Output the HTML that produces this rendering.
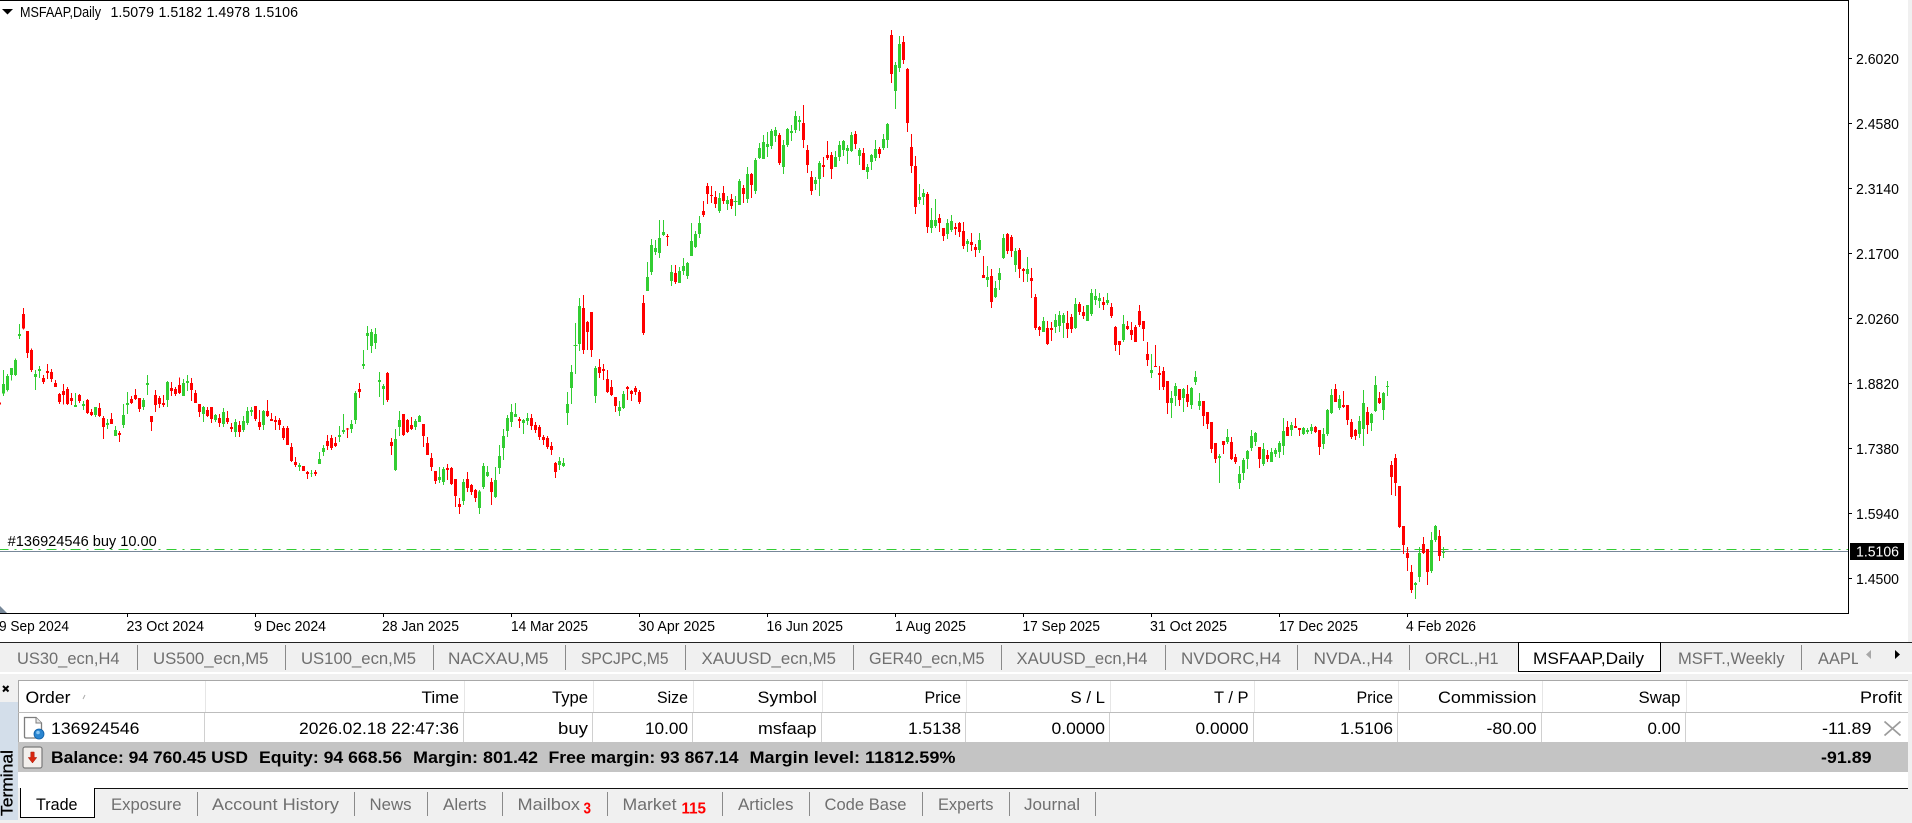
<!DOCTYPE html>
<html lang="en">
<head>
<meta charset="utf-8">
<title>MSFAAP,Daily</title>
<style>
html,body{margin:0;padding:0;background:#f0f0f0;width:1912px;height:823px;overflow:hidden}
svg{display:block;position:absolute;left:0;top:0}
text{font-family:"Liberation Sans",Arial,sans-serif;white-space:pre}
.c path{fill:none;shape-rendering:crispEdges}
.gw{stroke:#32cd32;stroke-width:3}
.gb{stroke:#32cd32;stroke-width:9}
.rw{stroke:#f00;stroke-width:3}
.rb{stroke:#f00;stroke-width:9}
.l{shape-rendering:crispEdges}
.ax{font-size:14.5px;fill:#000}
.tb{font-size:17px;fill:#6f6f6f}
.th{font-size:17px;fill:#000}
.bd{font-size:17px;font-weight:bold;fill:#000}
.rd{font-size:16px;font-weight:bold;fill:#f00}
</style>
</head>
<body>
<svg width="1912" height="823" viewBox="0 0 1912 823" xmlns="http://www.w3.org/2000/svg">
<!-- backgrounds -->
<rect x="0" y="0" width="1912" height="823" fill="#f0f0f0"/>
<rect x="0" y="0" width="1908" height="642" fill="#fff"/>

<!-- chart frame -->
<g class="l" fill="#000">
<rect x="0" y="0" width="1849" height="1"/>
<rect x="1848" y="0" width="1" height="614"/>
<rect x="0" y="613" width="1849" height="1"/>
<rect x="1849" y="58" width="3" height="1"/><rect x="1849" y="123" width="3" height="1"/><rect x="1849" y="188" width="3" height="1"/><rect x="1849" y="253" width="3" height="1"/><rect x="1849" y="318" width="3" height="1"/><rect x="1849" y="383" width="3" height="1"/><rect x="1849" y="448" width="3" height="1"/><rect x="1849" y="513" width="3" height="1"/><rect x="1849" y="578" width="3" height="1"/>
<rect x="127" y="613" width="1" height="4"/><rect x="255" y="613" width="1" height="4"/><rect x="383" y="613" width="1" height="4"/><rect x="511" y="613" width="1" height="4"/><rect x="639" y="613" width="1" height="4"/><rect x="767" y="613" width="1" height="4"/><rect x="895" y="613" width="1" height="4"/><rect x="1023" y="613" width="1" height="4"/><rect x="1151" y="613" width="1" height="4"/><rect x="1279" y="613" width="1" height="4"/><rect x="1407" y="613" width="1" height="4"/>
</g>
<polygon points="2,9 13,9 7.5,14.5" fill="#000"/>
<polygon points="0,606 7,613 0,613" fill="#778899"/>

<!-- order / price lines -->
<line class="l" x1="0" y1="549.5" x2="1848" y2="549.5" stroke="#32cd32" stroke-width="1" stroke-dasharray="10 6 2 6" stroke-dashoffset="1.33"/>
<rect class="l" x="0" y="551" width="1848" height="1" fill="#778899"/>

<!-- candles -->
<g class="c" transform="translate(.1667 290) scale(.33333)">
<path class="gw" d="M10 240V318M22 252V305M34 234V272M46 205V258M58 102V147M106 240V300M118 228V264M226 309V351M250 333V360M286 351V381M322 387V417M346 408V438M370 342V414M382 306V372M430 324V360M442 255V315M502 273V351M550 267V318M562 255V303M610 348V396M646 372V396M670 354V411M706 387V441M730 378V426M742 351V405M754 351V378M790 360V420M898 519V543M934 540V561M958 486V522M970 465V498M1018 408V456M1030 372V432M1054 390V429M1066 303V402M1090 180V237M1102 108V180M1114 117V189M1126 114V177M1138 246V321M1150 282V345M1186 417V543M1198 363V438M1246 387V420M1258 375V396M1318 531V579M1330 531V585M1390 567V645M1438 600V672"/>
<path class="gb" d="M10 282V310M22 258V300M34 234V255M46 210V255M58 132V138M106 252V261M118 237V243M226 345V351M250 342V348M286 351V375M322 399V405M346 420V438M370 375V405M382 339V345M430 330V351M442 279V285M502 276V330M550 279V318M562 273V279M610 351V372M646 375V390M670 366V402M706 396V426M730 393V420M742 363V399M754 360V366M790 363V405M898 525V531M934 549V551M958 507V522M970 474V486M1018 435V441M1030 420V426M1054 402V417M1066 309V390M1090 222V228M1102 129V138M1114 126V168M1126 132V159M1138 270V276M1150 288V297M1186 447V540M1198 390V411M1246 393V411M1258 378V396M1318 561V570M1330 537V576M1390 576V633M1438 604V654"/>
<path class="rw" d="M-2 337V344M70 54V118M82 123V204M94 175V246M130 255V282M142 222V267M154 237V276M166 270V291M178 309V342M190 282V343M202 291V345M214 309V345M238 312V339M262 327V372M274 357V378M298 339V381M310 378V447M334 369V402M358 423V456M394 318V342M406 297V330M418 324V366M454 378V423M466 300V366M478 318V354M490 315V351M514 276V318M526 291V318M538 262V312M574 264V333M586 300V339M598 342V381M622 351V381M634 351V399M658 372V411M682 363V402M694 399V426M718 393V441M766 348V393M778 360V420M802 330V381M814 369V393M826 378V420M838 384V420M850 408V450M862 408V465M874 459V516M886 501V531M910 528V543M922 543V567M946 540V558M982 435V480M994 435V480M1006 441V471M1042 414V444M1078 279V324M1162 246V336M1174 444V495M1210 372V438M1222 387V429M1234 381V420M1270 402V471M1282 441V495M1294 489V543M1306 543V582M1342 522V570M1354 531V585M1366 567V651M1378 624V672M1402 546V606M1414 582V615M1426 597V636"/>
<path class="rb" d="M-2 337V344M70 72V115M82 123V189M94 180V240M130 264V276M142 243V249M154 246V267M166 279V291M178 312V336M190 303V315M202 297V342M214 324V333M238 315V333M262 330V369M274 366V375M298 354V378M310 384V411M334 387V402M358 429V435M394 327V339M406 315V327M418 324V357M454 378V396M466 315V345M478 324V342M490 339V345M514 294V303M526 297V312M538 285V309M574 279V300M586 309V339M598 342V366M622 360V378M634 351V387M658 384V399M682 384V396M694 411V417M718 405V426M766 348V387M778 396V411M802 363V378M814 387V393M826 390V396M838 390V405M850 414V444M862 414V465M874 471V513M886 516V525M910 528V543M922 546V552M946 546V552M982 453V468M994 444V474M1006 459V468M1042 415V419M1078 297V306M1162 249V330M1174 456V468M1210 372V435M1222 390V426M1234 405V417M1270 402V438M1282 459V495M1294 504V531M1306 543V573M1342 534V540M1354 534V582M1366 567V618M1378 642V651M1402 567V594M1414 585V606M1426 600V624"/>
</g>
<g class="c" transform="translate(480.1667 270) scale(.33333)">
<path class="gw" d="M10 579V657M22 588V621M46 591V684M58 525V612M70 477V570M82 435V501M94 402V471M106 399V441M130 447V492M142 429V465M238 561V600M250 564V591M262 366V465M274 285V402M286 159V312M298 84V243M346 288V399M418 393V438M430 363V417"/>
<path class="gb" d="M10 588V651M22 606V618M46 630V681M58 558V594M70 498V534M82 444V483M94 426V456M106 432V441M130 450V459M142 444V453M238 573V585M250 579V588M262 402V429M274 306V354M298 108V222M346 294V378M418 411V423M430 372V414"/>
<path class="gw" d="M280 226H292" style="stroke-width:3"/>
<path class="rw" d="M34 624V705M118 441V474M154 432V480M166 456V489M178 465V510M190 495V525M202 498V537M214 516V555M226 576V624M310 75V252M322 153V240M334 126V261M358 267V324M370 282V330M382 300V369M394 330V378M406 381V426M442 348V390M454 360V393M466 348V375M478 360V402M490 75V195"/>
<path class="rb" d="M34 636V666M118 447V453M154 444V468M166 465V480M178 471V501M190 501V510M202 504V531M214 528V540M226 579V606M310 114V240M322 156V186M334 126V240M358 291V309M370 297V303M382 327V366M394 351V375M406 381V408M442 351V357M454 363V372M466 354V366M478 366V396M490 99V189"/>
</g>
<g class="c" transform="translate(640.1667 20) scale(.33333)">
<path class="gw" d="M22 726V813M34 657V765M46 660V705M58 600V714M70 600V648M94 735V798M118 741V789M130 714V765M142 726V777M154 609V708M166 633V684M178 588V654M238 519V579M262 528V570M286 528V588M298 477V555M322 441V549M346 414V522M358 369V417M370 345V417M382 336V411M394 327V387M406 321V366M430 360V462M442 324V381M454 315V363M466 273V339M478 288V333M526 471V510M538 423V528M586 393V441M598 363V423M610 360V408M622 375V432M634 336V396M658 384V435M682 432V477M694 402V450M706 360V423M730 342V390M742 309V384M766 126V267M778 48V156M838 492V552M850 507V555M874 564V639M886 537V624M922 597V657M934 585V636"/>
<path class="gb" d="M22 771V813M34 675V756M46 684V696M58 654V699M70 636V645M94 756V783M118 753V789M130 738V753M142 729V768M154 663V708M166 642V681M178 609V642M238 534V573M262 540V552M298 483V555M322 462V537M346 420V513M358 384V414M370 366V417M382 372V381M394 333V378M406 330V348M430 375V441M442 327V375M454 333V339M466 288V330M478 300V306M526 480V492M538 429V477M586 411V441M598 375V411M610 363V390M622 384V393M634 345V393M658 390V408M682 441V456M694 405V426M706 387V414M730 357V384M742 312V360M766 135V213M778 72V144M838 531V540M850 519V531M874 600V624M886 600V618M922 609V642M934 603V630"/>
<path class="gw" d="M280 544.5H292"/>
<path class="rw" d="M82 642V678M106 735V792M190 543V591M202 489V552M214 498V549M226 513V564M250 498V552M274 522V567M310 495V549M334 459V534M418 339V435M490 255V384M502 375V459M514 453V525M550 411V471M562 363V420M574 396V477M646 333V387M670 384V450M718 381V414M754 30V189M790 48V132M802 144V336M814 342V459M826 408V582M862 516V639M898 582V636M910 624V663M946 609V645M958 606V651"/>
<path class="rb" d="M82 648V651M106 759V786M190 573V585M202 498V522M214 525V528M226 531V552M250 519V543M274 537V558M310 504V522M334 462V495M418 345V429M490 309V360M502 390V435M514 471V513M550 435V441M562 405V414M574 405V447M646 342V372M670 399V450M718 387V402M754 45V162M790 66V120M802 147V309M814 381V438M826 438V561M862 522V621M898 594V609M910 624V648M946 621V627M958 609V636"/>
</g>
<g class="c" transform="translate(880.1667 20) scale(.33333)">
<path class="gw" d="M262 657V696M298 639V699"/>
<path class="gb" d="M262 663V672M298 660V690"/>
<path class="rw" d="M250 606V687M274 639V693M286 672V711"/>
<path class="rb" d="M250 633V678M274 666V675M286 681V690"/>
</g>
<g class="c" transform="translate(960.1667 220) scale(.33333)">
<path class="gw" d="M82 138V201M106 183V234M118 144V210M130 42V117M166 84V156M202 111V186M250 291V336M286 282V339M298 273V336M310 279V354M346 234V327M382 255V303M394 207V288M406 207V255M418 219V264M442 219V255M490 285V366M574 402V474M634 513V594M646 489V558M670 504V576M694 501V567M706 453V495M718 519V570M778 702V789M802 627V672M838 738V807M850 714V780M862 690V747M874 630V693M886 636V678M910 669V738M934 684V726M946 684V711M958 663V714M970 594V705M994 606V648M1030 621V645M1042 624V642M1054 612V642"/>
<path class="gb" d="M82 171V180M106 204V231M118 159V180M130 54V114M166 93V135M202 147V162M250 303V336M286 300V321M298 285V318M310 285V309M346 252V324M382 255V303M394 219V282M406 228V240M418 234V243M442 240V249M490 312V360M574 450V459M634 534V549M646 498V528M670 507V534M694 504V555M706 471V486M718 543V558M778 708V714M802 651V666M838 762V789M850 720V759M862 693V717M874 648V684M886 639V666M910 687V732M934 696V726M946 690V702M958 669V696M970 633V678M994 615V630M1030 624V642M1042 630V636M1054 621V633"/>
<path class="rw" d="M70 108V174M94 147V264M142 39V102M154 45V111M178 84V174M190 144V186M214 144V234M226 222V330M238 318V348M262 303V375M274 306V363M322 273V354M334 282V339M358 246V285M370 258V297M430 231V270M454 249V294M466 318V393M478 363V405M502 303V330M514 306V360M526 315V366M538 255V321M550 303V363M562 366V438M586 375V441M598 438V510M610 441V510M622 483V582M658 507V558M682 495V561M730 543V618M742 576V627M754 606V699M766 669V729M790 663V702M814 651V720M826 702V732M898 681V744M922 690V726M982 603V648M1006 594V624M1018 624V648M1066 618V639M1078 630V705"/>
<path class="rb" d="M70 165V174M94 168V246M142 42V93M154 51V93M178 90V147M190 147V153M214 174V183M226 231V324M238 321V330M262 324V372M274 324V330M322 309V327M334 291V327M358 252V276M370 276V288M430 246V255M454 261V288M466 321V375M478 363V375M502 318V327M514 330V345M526 321V366M538 273V315M550 303V327M562 402V420M586 438V441M598 459V465M610 453V501M622 483V549M658 507V540M682 522V546M730 543V588M742 576V612M754 606V687M766 669V717M790 663V675M814 666V717M826 711V726M898 681V717M922 705V717M982 621V648M1006 618V624M1018 624V630M1066 621V636M1078 630V681"/>
</g>
<g class="c" transform="translate(1220.1667 360) scale(.33333)">
<path class="gw" d="M310 204V267M322 147V228M334 87V162M358 105V150M418 168V234M430 90V258M454 159V213M466 48V156M490 96V180M502 63V108M586 666V717M598 561V666M634 516V639M646 495V546M670 561V594"/>
<path class="gb" d="M310 222V252M322 150V222M334 105V159M358 117V144M418 183V222M430 129V207M454 162V189M466 75V153M490 99V150M502 78V81M586 669V675M598 579V651M634 540V633M646 498V540M670 576V579"/>
<path class="rw" d="M298 210V285M346 72V126M370 93V144M382 135V195M394 177V237M406 207V240M442 141V222M478 96V132M514 303V405M526 282V408M538 378V504M550 498V582M562 561V633M574 615V699M610 531V582M622 567V675M658 510V603"/>
<path class="rb" d="M298 210V261M346 87V126M370 135V141M382 135V180M394 186V231M406 210V228M442 156V195M478 114V129M514 315V351M526 294V369M538 378V501M550 498V555M562 579V594M574 636V690M610 552V579M622 567V636M658 528V588"/>
</g>

<!-- chart text -->
<text class="ax" x="20" y="17" textLength="81" lengthAdjust="spacingAndGlyphs">MSFAAP,Daily</text>
<text class="ax" x="110.5" y="17" textLength="43.5" lengthAdjust="spacingAndGlyphs">1.5079</text>
<text class="ax" x="158.5" y="17" textLength="43.5" lengthAdjust="spacingAndGlyphs">1.5182</text>
<text class="ax" x="206.5" y="17" textLength="43.5" lengthAdjust="spacingAndGlyphs">1.4978</text>
<text class="ax" x="254.5" y="17" textLength="43.5" lengthAdjust="spacingAndGlyphs">1.5106</text>
<text class="ax" x="7.7" y="546" textLength="149" lengthAdjust="spacingAndGlyphs">#136924546 buy 10.00</text>

<g class="ax">
<text x="1856" y="64" textLength="43" lengthAdjust="spacingAndGlyphs">2.6020</text>
<text x="1856" y="129" textLength="43" lengthAdjust="spacingAndGlyphs">2.4580</text>
<text x="1856" y="194" textLength="43" lengthAdjust="spacingAndGlyphs">2.3140</text>
<text x="1856" y="259" textLength="43" lengthAdjust="spacingAndGlyphs">2.1700</text>
<text x="1856" y="324" textLength="43" lengthAdjust="spacingAndGlyphs">2.0260</text>
<text x="1856" y="389" textLength="43" lengthAdjust="spacingAndGlyphs">1.8820</text>
<text x="1856" y="454" textLength="43" lengthAdjust="spacingAndGlyphs">1.7380</text>
<text x="1856" y="519" textLength="43" lengthAdjust="spacingAndGlyphs">1.5940</text>
<text x="1856" y="584" textLength="43" lengthAdjust="spacingAndGlyphs">1.4500</text>
</g>
<rect class="l" x="1850" y="543" width="54" height="17" fill="#000"/>
<text x="1856" y="556.5" font-size="14.5" fill="#fff" textLength="43" lengthAdjust="spacingAndGlyphs">1.5106</text>

<g class="ax">
<text x="-1" y="631" textLength="70" lengthAdjust="spacingAndGlyphs">9 Sep 2024</text>
<text x="126.5" y="631" textLength="77.5" lengthAdjust="spacingAndGlyphs">23 Oct 2024</text>
<text x="254" y="631" textLength="72" lengthAdjust="spacingAndGlyphs">9 Dec 2024</text>
<text x="382" y="631" textLength="77" lengthAdjust="spacingAndGlyphs">28 Jan 2025</text>
<text x="511" y="631" textLength="77" lengthAdjust="spacingAndGlyphs">14 Mar 2025</text>
<text x="638.5" y="631" textLength="76.5" lengthAdjust="spacingAndGlyphs">30 Apr 2025</text>
<text x="766.5" y="631" textLength="76.5" lengthAdjust="spacingAndGlyphs">16 Jun 2025</text>
<text x="895" y="631" textLength="71" lengthAdjust="spacingAndGlyphs">1 Aug 2025</text>
<text x="1022.5" y="631" textLength="77.5" lengthAdjust="spacingAndGlyphs">17 Sep 2025</text>
<text x="1150" y="631" textLength="77" lengthAdjust="spacingAndGlyphs">31 Oct 2025</text>
<text x="1279" y="631" textLength="79" lengthAdjust="spacingAndGlyphs">17 Dec 2025</text>
<text x="1406" y="631" textLength="70" lengthAdjust="spacingAndGlyphs">4 Feb 2026</text>
</g>

<!-- chart tabs -->
<rect class="l" x="0" y="642" width="1912" height="1" fill="#222"/>
<rect class="l" x="0" y="672" width="1912" height="2" fill="#fff"/>
<g class="l" fill="#8a8a8a">
<rect x="137" y="645" width="1" height="25"/><rect x="285" y="645" width="1" height="25"/><rect x="433" y="645" width="1" height="25"/><rect x="565" y="645" width="1" height="25"/><rect x="685" y="645" width="1" height="25"/><rect x="853" y="645" width="1" height="25"/><rect x="1001" y="645" width="1" height="25"/><rect x="1165" y="645" width="1" height="25"/><rect x="1297" y="645" width="1" height="25"/><rect x="1409" y="645" width="1" height="25"/><rect x="1801" y="645" width="1" height="25"/>
</g>
<g class="tb">
<text x="17" y="664" textLength="102.5" lengthAdjust="spacingAndGlyphs">US30_ecn,H4</text>
<text x="153" y="664" textLength="115.5" lengthAdjust="spacingAndGlyphs">US500_ecn,M5</text>
<text x="301" y="664" textLength="115" lengthAdjust="spacingAndGlyphs">US100_ecn,M5</text>
<text x="448" y="664" textLength="100.5" lengthAdjust="spacingAndGlyphs">NACXAU,M5</text>
<text x="581" y="664" textLength="87.5" lengthAdjust="spacingAndGlyphs">SPCJPC,M5</text>
<text x="701.5" y="664" textLength="134.5" lengthAdjust="spacingAndGlyphs">XAUUSD_ecn,M5</text>
<text x="869" y="664" textLength="115.5" lengthAdjust="spacingAndGlyphs">GER40_ecn,M5</text>
<text x="1016.5" y="664" textLength="131" lengthAdjust="spacingAndGlyphs">XAUUSD_ecn,H4</text>
<text x="1181" y="664" textLength="100" lengthAdjust="spacingAndGlyphs">NVDORC,H4</text>
<text x="1313.5" y="664" textLength="79.5" lengthAdjust="spacingAndGlyphs">NVDA.,H4</text>
<text x="1425" y="664" textLength="73.5" lengthAdjust="spacingAndGlyphs">ORCL.,H1</text>
<text x="1678" y="664" textLength="106.5" lengthAdjust="spacingAndGlyphs">MSFT.,Weekly</text>
<text x="1818" y="664" textLength="42" lengthAdjust="spacingAndGlyphs">AAPL</text>
</g>
<rect class="l" x="1858" y="645" width="7" height="24" fill="#f0f0f0"/>
<polygon points="1871,650 1871,659 1866,654.5" fill="#a8a8a8"/>
<polygon points="1895,650 1895,659 1900,654.5" fill="#000"/>
<rect class="l" x="1518" y="642" width="143" height="30" fill="#fff"/>
<g class="l" fill="#000">
<rect x="1518" y="642" width="143" height="1"/>
<rect x="1518" y="642" width="1" height="30"/>
<rect x="1660" y="642" width="1" height="30"/>
<rect x="1518" y="671" width="143" height="1"/>
</g>
<text class="th" x="1533" y="664" textLength="111" lengthAdjust="spacingAndGlyphs">MSFAAP,Daily</text>

<!-- terminal strip -->
<rect class="l" x="0" y="702" width="18" height="118" fill="#d3deea"/>
<path d="M3 686L8.500 691.500M8.500 686L3 691.500" stroke="#000" stroke-width="2" fill="none"/>
<text x="0" y="0" font-size="17" fill="#000" stroke="#000" stroke-width=".3" transform="translate(12.500 816) rotate(-90)" textLength="66" lengthAdjust="spacingAndGlyphs">Terminal</text>

<!-- table -->
<rect class="l" x="18" y="680" width="1890" height="108" fill="#fff"/>
<rect class="l" x="18" y="680" width="1890" height="1" fill="#a8a8a8"/>
<rect class="l" x="18" y="680" width="1" height="62" fill="#a8a8a8"/>
<rect class="l" x="18" y="712" width="1890" height="1" fill="#bdbdbd"/>
<rect class="l" x="18" y="742" width="1890" height="30" fill="#c4c4c4"/>
<rect class="l" x="20" y="788" width="1888" height="1" fill="#111"/>
<g class="l" fill="#e6e6e6">
<rect x="205" y="681" width="1" height="31"/><rect x="464" y="681" width="1" height="31"/><rect x="593" y="681" width="1" height="31"/><rect x="693" y="681" width="1" height="31"/><rect x="822" y="681" width="1" height="31"/><rect x="966" y="681" width="1" height="31"/><rect x="1110" y="681" width="1" height="31"/><rect x="1254" y="681" width="1" height="31"/><rect x="1398" y="681" width="1" height="31"/><rect x="1542" y="681" width="1" height="31"/><rect x="1686" y="681" width="1" height="31"/>
</g>
<g class="l" fill="#d0d0d0">
<rect x="204" y="713" width="1" height="29"/><rect x="463" y="713" width="1" height="29"/><rect x="592" y="713" width="1" height="29"/><rect x="692" y="713" width="1" height="29"/><rect x="821" y="713" width="1" height="29"/><rect x="965" y="713" width="1" height="29"/><rect x="1109" y="713" width="1" height="29"/><rect x="1253" y="713" width="1" height="29"/><rect x="1397" y="713" width="1" height="29"/><rect x="1541" y="713" width="1" height="29"/><rect x="1685" y="713" width="1" height="29"/>
</g>
<g class="th">
<text x="25.500" y="703" textLength="45" lengthAdjust="spacingAndGlyphs">Order</text>
<text x="421.500" y="703" textLength="37.500" lengthAdjust="spacingAndGlyphs">Time</text>
<text x="552" y="703" textLength="36" lengthAdjust="spacingAndGlyphs">Type</text>
<text x="657" y="703" textLength="31" lengthAdjust="spacingAndGlyphs">Size</text>
<text x="757.500" y="703" textLength="59.500" lengthAdjust="spacingAndGlyphs">Symbol</text>
<text x="924.500" y="703" textLength="36.500" lengthAdjust="spacingAndGlyphs">Price</text>
<text x="1070.500" y="703" textLength="34.500" lengthAdjust="spacingAndGlyphs">S / L</text>
<text x="1214" y="703" textLength="34.500" lengthAdjust="spacingAndGlyphs">T / P</text>
<text x="1356.500" y="703" textLength="36.500" lengthAdjust="spacingAndGlyphs">Price</text>
<text x="1438" y="703" textLength="98.500" lengthAdjust="spacingAndGlyphs">Commission</text>
<text x="1638.500" y="703" textLength="42" lengthAdjust="spacingAndGlyphs">Swap</text>
<text x="1860" y="703" textLength="42" lengthAdjust="spacingAndGlyphs">Profit</text>
<text x="51" y="734" textLength="88.500" lengthAdjust="spacingAndGlyphs">136924546</text>
<text x="299" y="734" textLength="160" lengthAdjust="spacingAndGlyphs">2026.02.18 22:47:36</text>
<text x="558" y="734" textLength="30" lengthAdjust="spacingAndGlyphs">buy</text>
<text x="645" y="734" textLength="43" lengthAdjust="spacingAndGlyphs">10.00</text>
<text x="758" y="734" textLength="58.500" lengthAdjust="spacingAndGlyphs">msfaap</text>
<text x="908" y="734" textLength="53" lengthAdjust="spacingAndGlyphs">1.5138</text>
<text x="1051.500" y="734" textLength="53.500" lengthAdjust="spacingAndGlyphs">0.0000</text>
<text x="1195.500" y="734" textLength="53" lengthAdjust="spacingAndGlyphs">0.0000</text>
<text x="1340" y="734" textLength="53" lengthAdjust="spacingAndGlyphs">1.5106</text>
<text x="1486.500" y="734" textLength="50" lengthAdjust="spacingAndGlyphs">-80.00</text>
<text x="1647.500" y="734" textLength="33" lengthAdjust="spacingAndGlyphs">0.00</text>
<text x="1822" y="734" textLength="49.500" lengthAdjust="spacingAndGlyphs">-11.89</text>
</g>
<g class="bd">
<text x="51" y="763" textLength="197" lengthAdjust="spacingAndGlyphs">Balance: 94 760.45 USD</text>
<text x="259" y="763" textLength="143" lengthAdjust="spacingAndGlyphs">Equity: 94 668.56</text>
<text x="413" y="763" textLength="125" lengthAdjust="spacingAndGlyphs">Margin: 801.42</text>
<text x="548.500" y="763" textLength="190" lengthAdjust="spacingAndGlyphs">Free margin: 93 867.14</text>
<text x="749.500" y="763" textLength="206" lengthAdjust="spacingAndGlyphs">Margin level: 11812.59%</text>
<text x="1821" y="763" textLength="50.500" lengthAdjust="spacingAndGlyphs">-91.89</text>
</g>
<!-- sort mark -->
<path d="M83 699L85 695" stroke="#aaa" stroke-width="1" fill="none"/>
<!-- close icon -->
<path d="M1884.500 721.500L1900.500 735.500M1900.500 721.500L1884.500 735.500" stroke="#9c9c9c" stroke-width="1.800" fill="none"/>
<!-- document icon -->
<path d="M24.500 717.500H36L41.500 723V736.500Q41.500 738 40 738H26Q24.500 738 24.500 736.500Z" fill="#fff" stroke="#7d7d7d" stroke-width="1.300"/>
<path d="M36 717.500V723H41.500" fill="#e8e8e8" stroke="#7d7d7d" stroke-width="1"/>
<circle cx="39" cy="734" r="5" fill="#2a85d0" stroke="#0d5ea6" stroke-width=".8"/>
<circle cx="38" cy="732.500" r="1.800" fill="#8ac6f2"/>
<!-- balance icon -->
<rect x="23" y="747" width="19" height="21" rx="2" fill="#f2efec" stroke="#7a7a7a" stroke-width="1.200"/>
<path d="M30.800 752H34.200V757.500H36.800L32.500 763L28.200 757.500H30.800Z" fill="#d8260f" stroke="#a81a08" stroke-width=".5"/>

<!-- bottom tabs -->
<rect class="l" x="20" y="788" width="75" height="29" fill="#fff"/>
<g class="l" fill="#000">
<rect x="20" y="788" width="1" height="29"/>
<rect x="94" y="788" width="1" height="30"/>
<rect x="20" y="817" width="75" height="1"/>
</g>
<text class="th" x="36" y="810" textLength="41.500" lengthAdjust="spacingAndGlyphs">Trade</text>
<g class="l" fill="#8a8a8a">
<rect x="197" y="792" width="1" height="24"/><rect x="354" y="792" width="1" height="24"/><rect x="427" y="792" width="1" height="24"/><rect x="502" y="792" width="1" height="24"/><rect x="607" y="792" width="1" height="24"/><rect x="722" y="792" width="1" height="24"/><rect x="809" y="792" width="1" height="24"/><rect x="922" y="792" width="1" height="24"/><rect x="1009" y="792" width="1" height="24"/><rect x="1095" y="792" width="1" height="24"/>
</g>
<g class="tb">
<text x="111" y="810" textLength="70.500" lengthAdjust="spacingAndGlyphs">Exposure</text>
<text x="212" y="810" textLength="127" lengthAdjust="spacingAndGlyphs">Account History</text>
<text x="369.500" y="810" textLength="42" lengthAdjust="spacingAndGlyphs">News</text>
<text x="443" y="810" textLength="43.500" lengthAdjust="spacingAndGlyphs">Alerts</text>
<text x="517.500" y="810" textLength="62.500" lengthAdjust="spacingAndGlyphs">Mailbox</text>
<text x="622.500" y="810" textLength="54" lengthAdjust="spacingAndGlyphs">Market</text>
<text x="738" y="810" textLength="55.500" lengthAdjust="spacingAndGlyphs">Articles</text>
<text x="824.500" y="810" textLength="82" lengthAdjust="spacingAndGlyphs">Code Base</text>
<text x="938" y="810" textLength="55.500" lengthAdjust="spacingAndGlyphs">Experts</text>
<text x="1024" y="810" textLength="56" lengthAdjust="spacingAndGlyphs">Journal</text>
</g>
<text class="rd" x="583.500" y="813.500" textLength="7.500" lengthAdjust="spacingAndGlyphs">3</text>
<text class="rd" x="681.500" y="813.500" textLength="24.500" lengthAdjust="spacingAndGlyphs">115</text>
</svg>
</body>
</html>
